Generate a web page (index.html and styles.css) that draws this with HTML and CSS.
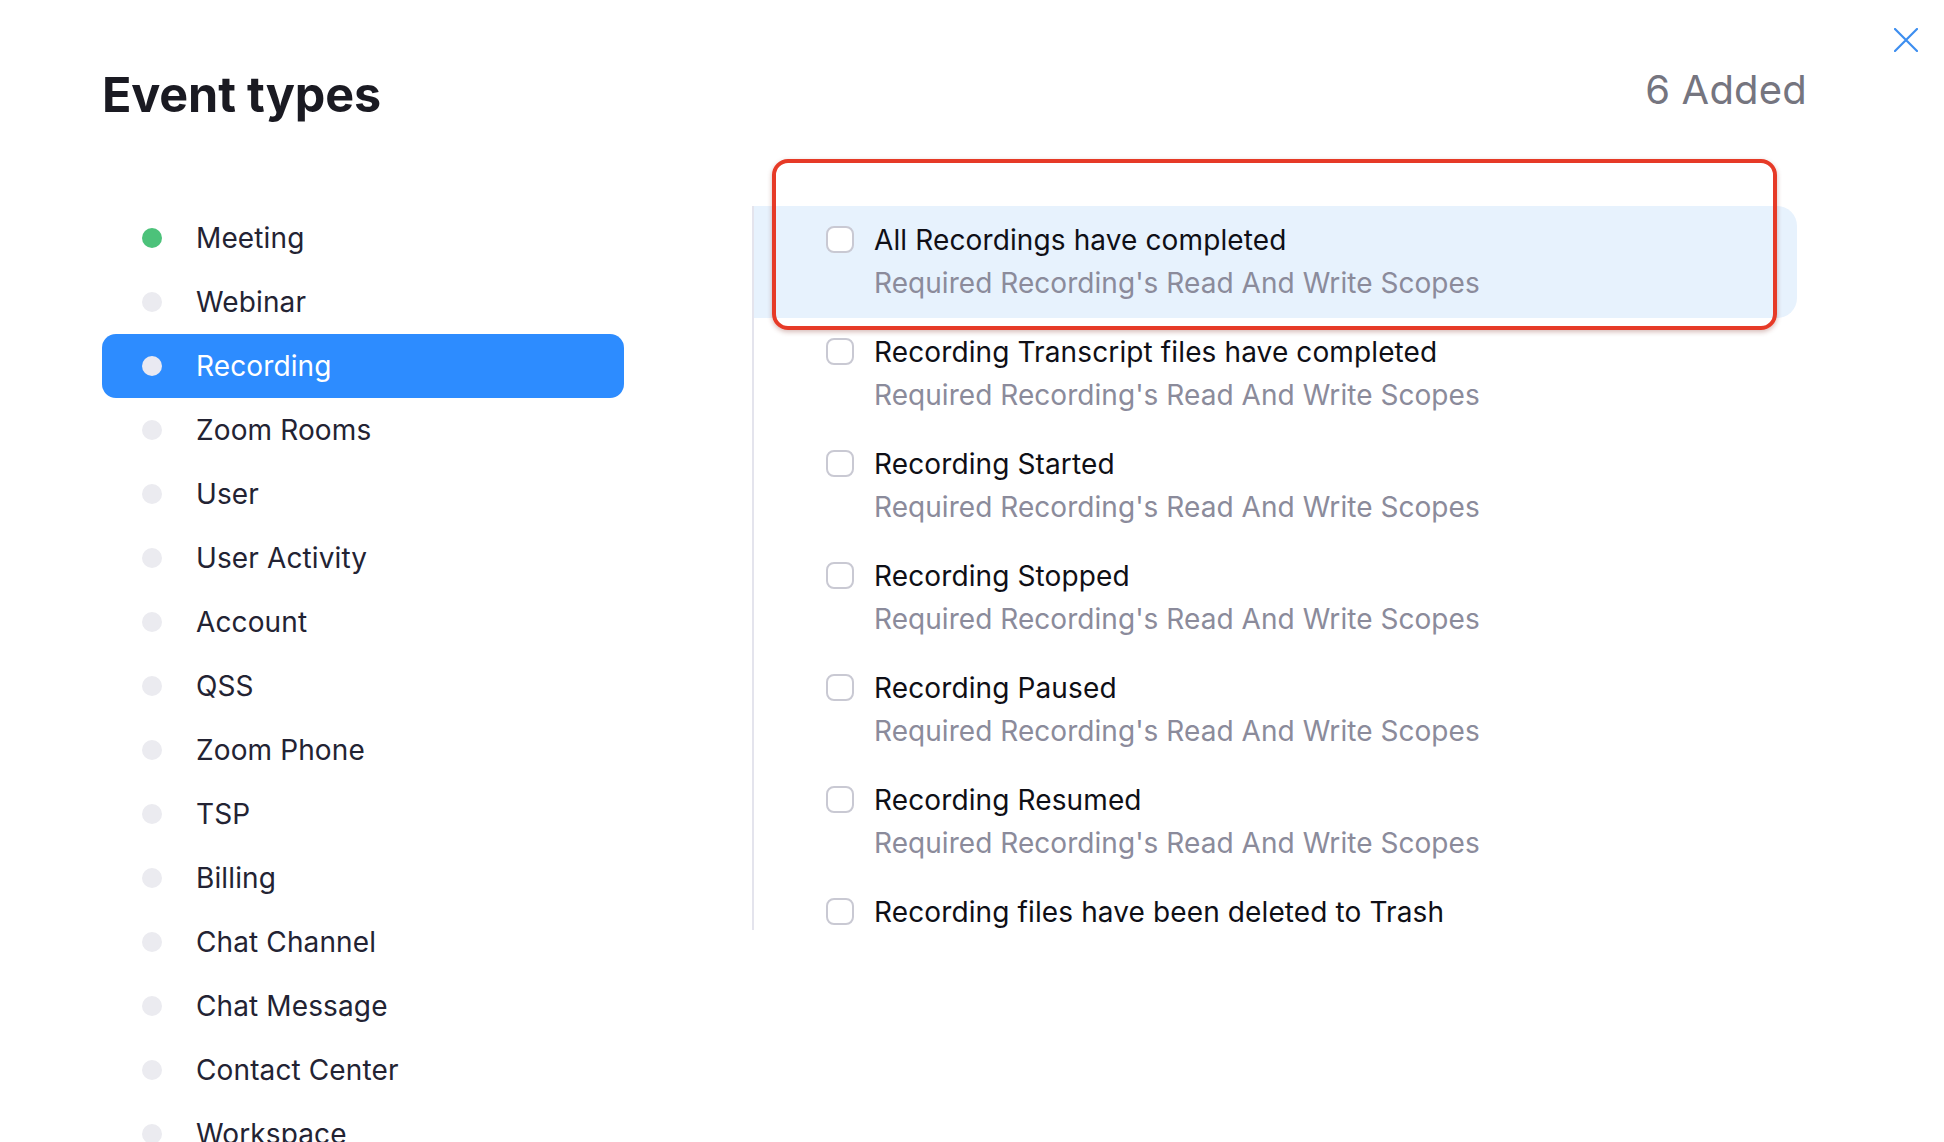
FILE: index.html
```html
<!DOCTYPE html>
<html lang="en">
<head>
<meta charset="utf-8">
<title>Event types</title>
<link rel="stylesheet" href="styles.css">
</head>
<body>
<div class="modal">
  <button class="close" aria-label="Close">
    <svg viewBox="0 0 24 24" width="24" height="24"><path d="M1 1 L23 23 M23 1 L1 23" stroke="#3d8ef0" stroke-width="2.2" fill="none" stroke-linecap="round"/></svg>
  </button>
  <header class="head">
    <h1 class="title">Event types</h1>
    <div class="added">6 Added</div>
  </header>
  <div class="body">
    <ul class="cats">
      <li class="cat"><span class="dot on"></span>Meeting</li>
      <li class="cat"><span class="dot"></span>Webinar</li>
      <li class="cat active"><span class="dot"></span>Recording</li>
      <li class="cat"><span class="dot"></span>Zoom Rooms</li>
      <li class="cat"><span class="dot"></span>User</li>
      <li class="cat"><span class="dot"></span>User Activity</li>
      <li class="cat"><span class="dot"></span>Account</li>
      <li class="cat"><span class="dot"></span>QSS</li>
      <li class="cat"><span class="dot"></span>Zoom Phone</li>
      <li class="cat"><span class="dot"></span>TSP</li>
      <li class="cat"><span class="dot"></span>Billing</li>
      <li class="cat"><span class="dot"></span>Chat Channel</li>
      <li class="cat"><span class="dot"></span>Chat Message</li>
      <li class="cat"><span class="dot"></span>Contact Center</li>
      <li class="cat"><span class="dot"></span>Workspace</li>
    </ul>
    <div class="events">
      <div class="event hover">
        <span class="box"></span>
        <div class="ev-text">
          <div class="ev-title">All Recordings have completed</div>
          <div class="ev-sub">Required Recording's Read And Write Scopes</div>
        </div>
        <div class="annot"></div>
      </div>
      <div class="event">
        <span class="box"></span>
        <div class="ev-text">
          <div class="ev-title">Recording Transcript files have completed</div>
          <div class="ev-sub">Required Recording's Read And Write Scopes</div>
        </div>
      </div>
      <div class="event">
        <span class="box"></span>
        <div class="ev-text">
          <div class="ev-title">Recording Started</div>
          <div class="ev-sub">Required Recording's Read And Write Scopes</div>
        </div>
      </div>
      <div class="event">
        <span class="box"></span>
        <div class="ev-text">
          <div class="ev-title">Recording Stopped</div>
          <div class="ev-sub">Required Recording's Read And Write Scopes</div>
        </div>
      </div>
      <div class="event">
        <span class="box"></span>
        <div class="ev-text">
          <div class="ev-title">Recording Paused</div>
          <div class="ev-sub">Required Recording's Read And Write Scopes</div>
        </div>
      </div>
      <div class="event">
        <span class="box"></span>
        <div class="ev-text">
          <div class="ev-title">Recording Resumed</div>
          <div class="ev-sub">Required Recording's Read And Write Scopes</div>
        </div>
      </div>
      <div class="event last">
        <span class="box"></span>
        <div class="ev-text">
          <div class="ev-title">Recording files have been deleted to Trash</div>
        </div>
      </div>
    </div>
  </div>
</div>
</body>
</html>
```

FILE: styles.css
```css
* { box-sizing: border-box; }
html, body { margin: 0; padding: 0; background: #ffffff; }
body {
  font-family: Inter, "Noto Sans", "Liberation Sans", sans-serif;
  color: #232333;
  width: 1944px;
  height: 1142px;
  overflow: hidden;
}
.modal {
  position: relative;
  padding: 66px 137px 0 102px;
}
.close {
  position: absolute;
  top: 28px;
  right: 26px;
  width: 24px;
  height: 24px;
  padding: 0;
  border: 0;
  background: none;
  display: block;
}
.close svg { display: block; }
.head {
  display: flex;
  justify-content: space-between;
  align-items: flex-start;
}
.title {
  margin: 0;
  font-size: 48.5px;
  font-weight: 700;
  line-height: 58px;
  color: #1a1a22;
  letter-spacing: -0.15px;
}
.added {
  font-size: 40px;
  line-height: 48px;
  color: #75757f;
  font-weight: 400;
  letter-spacing: 0.2px;
}
.body {
  display: flex;
  align-items: flex-start;
  gap: 128px;
  margin-top: 82px;
}
.cats {
  list-style: none;
  margin: 0;
  padding: 0;
  width: 522px;
  flex: none;
}
.cat {
  height: 64px;
  display: flex;
  align-items: center;
  padding-left: 40px;
  font-size: 28px;
  letter-spacing: 0.12px;
  color: #232333;
  border-radius: 14px;
}
.dot {
  width: 20px;
  height: 20px;
  border-radius: 50%;
  background: #ebebf0;
  margin-right: 34px;
  flex: none;
}
.dot.on { background: #4cc27a; }
.cat.active {
  background: #2d8cff;
  color: #ffffff;
}
.cat.active .dot { background: #e9e9f2; }
.events {
  width: 1045px;
  border-left: 2px solid #e4e4ed;
  flex: none;
}
.event {
  position: relative;
  display: flex;
  align-items: flex-start;
  padding: 16px 0 17px 72px;
  min-height: 112px;
}
.event.hover {
  background: #e7f2fd;
  border-radius: 0 20px 20px 0;
}
.event.last {
  min-height: 0;
  padding-bottom: 0;
}
.box {
  width: 28px;
  height: 27px;
  border: 2px solid #c9c9d3;
  border-radius: 8px;
  background: #ffffff;
  margin-top: 4px;
  margin-right: 20px;
  flex: none;
}
.ev-title {
  font-size: 28px;
  line-height: 36px;
  letter-spacing: 0.12px;
  color: #0f0f16;
}
.ev-sub {
  font-size: 28px;
  line-height: 36px;
  margin-top: 7px;
  letter-spacing: 0.05px;
  color: #8b8b9b;
}
.annot {
  position: absolute;
  left: 18px;
  top: -47px;
  width: 1005px;
  height: 171px;
  border: 4px solid #e63a27;
  border-radius: 16px;
  box-shadow: 0 2px 5px rgba(120, 30, 20, 0.3);
  pointer-events: none;
}
```
